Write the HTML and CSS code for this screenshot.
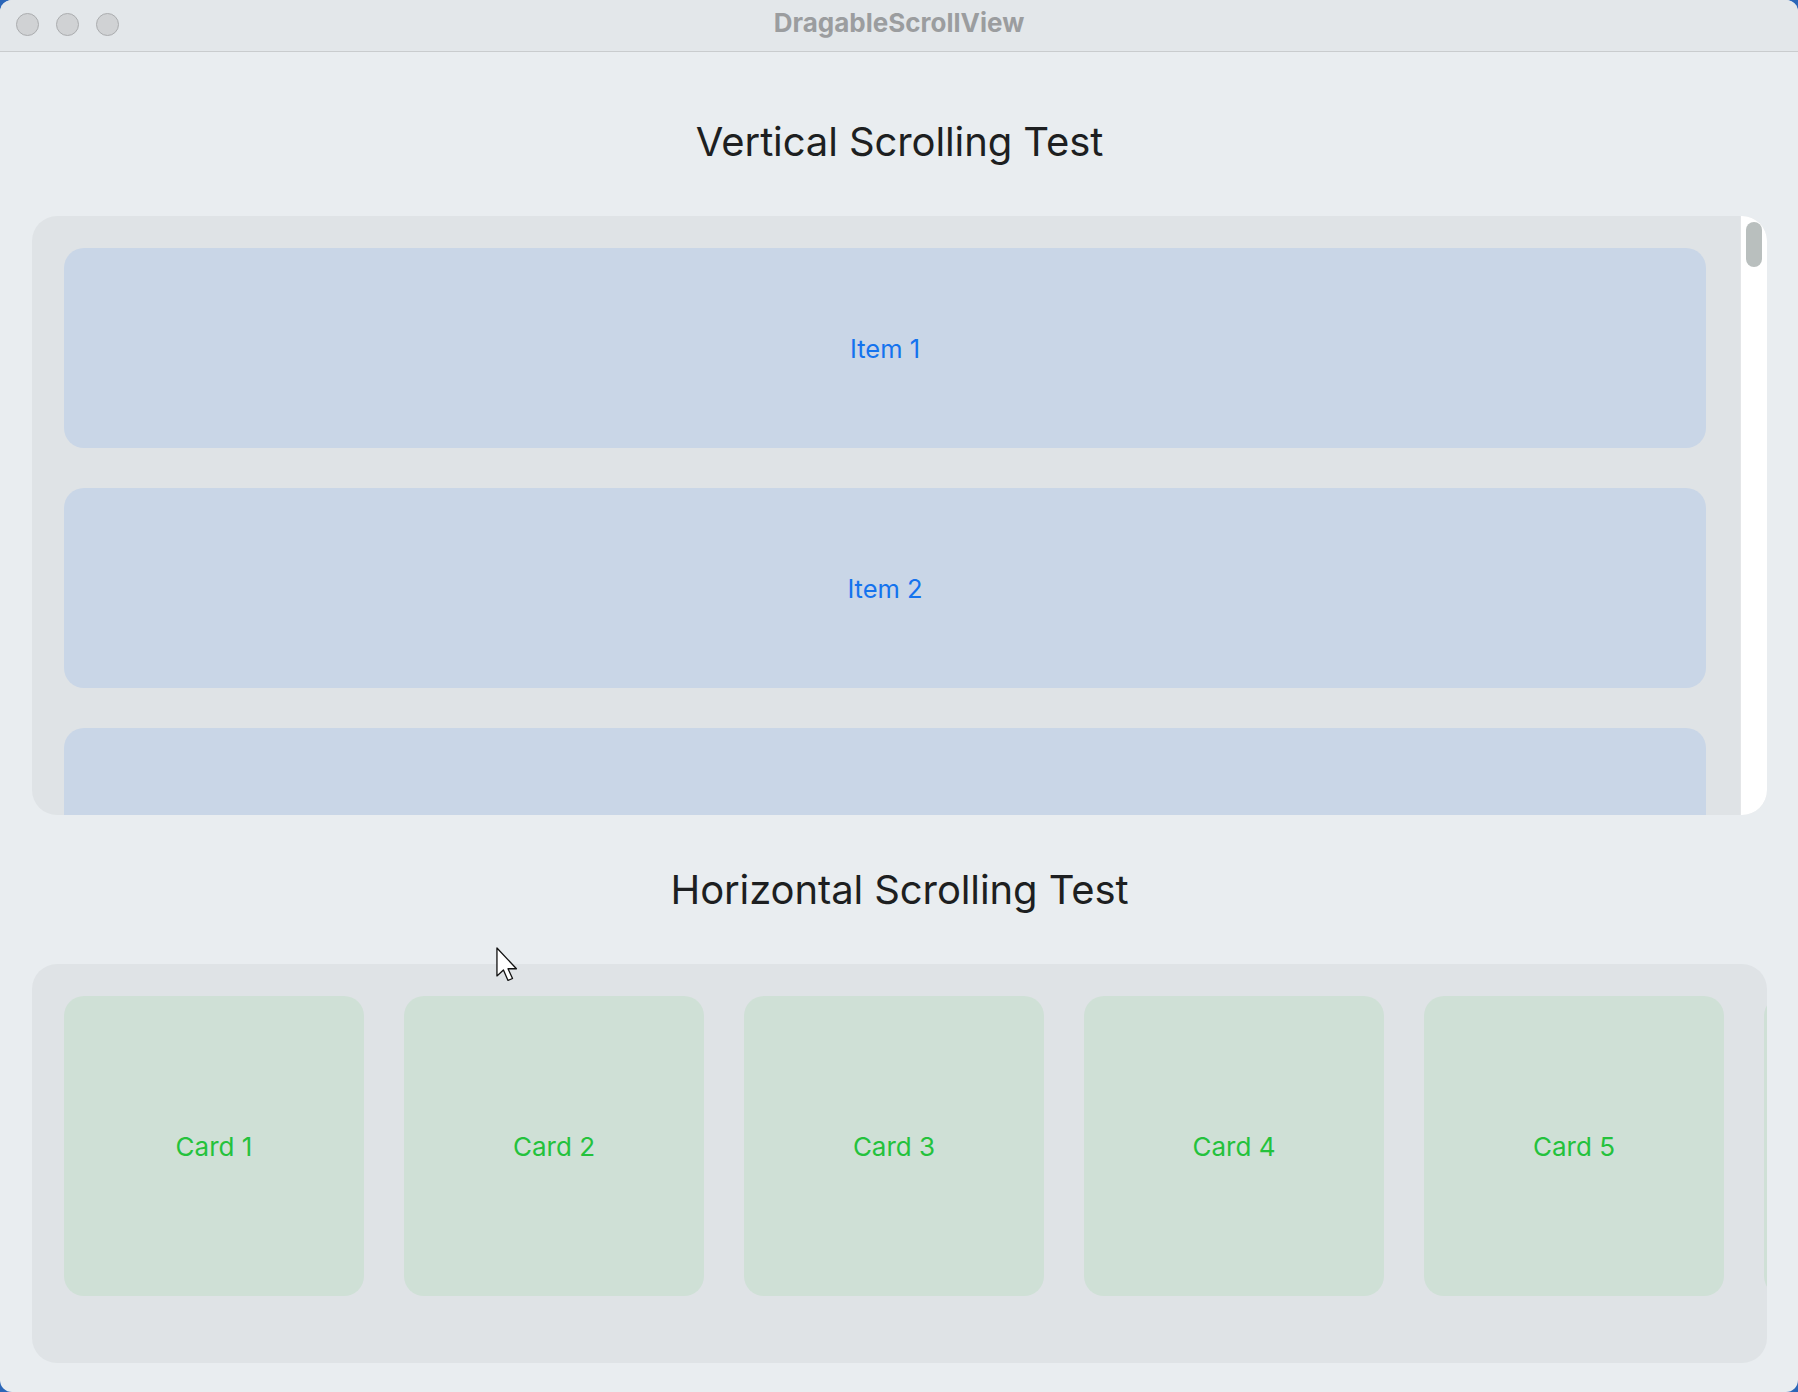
FILE: index.html
```html
<!DOCTYPE html>
<html lang="en">
<head>
<meta charset="utf-8">
<title>DragableScrollView</title>
<link rel="stylesheet" href="styles.css">
</head>
<body>
<div class="window">
  <header class="titlebar">
    <div class="lights">
      <span class="light"></span>
      <span class="light"></span>
      <span class="light"></span>
    </div>
    <div class="title">DragableScrollView</div>
    <div class="spacer"></div>
  </header>
  <main class="content">
    <h2 class="heading">Vertical Scrolling Test</h2>
    <section class="vpanel">
      <div class="vscroll">
        <div class="item">Item 1</div>
        <div class="item">Item 2</div>
        <div class="item"></div>
      </div>
      <div class="track"><div class="thumb"></div></div>
    </section>
    <h2 class="heading">Horizontal Scrolling Test</h2>
    <section class="hpanel">
      <div class="hscroll">
        <div class="card">Card 1</div>
        <div class="card">Card 2</div>
        <div class="card">Card 3</div>
        <div class="card">Card 4</div>
        <div class="card">Card 5</div>
        <div class="card"></div>
      </div>
    </section>
  </main>
  <svg class="cursor" width="26" height="39" viewBox="0 0 20 30">
    <path d="M1.5 1.5 L1.5 23 L6.5 18.5 L10 26.5 L13.5 25 L10 17.5 L16.5 17.5 Z" fill="#ffffff" stroke="#111111" stroke-width="1" stroke-linejoin="round"/>
  </svg>
</div>
</body>
</html>
```

FILE: styles.css
```css
* { box-sizing: border-box; }
html, body { margin: 0; padding: 0; }
body {
  background: #2b66b8;
  width: 1798px;
  height: 1392px;
  overflow: hidden;
  font-family: Inter, "Liberation Sans", sans-serif;
}
.window {
  position: relative;
  width: 1798px;
  height: 1392px;
  background: #e9edf0;
  border-radius: 12px;
  overflow: hidden;
}
.titlebar {
  height: 52px;
  background: #e3e7ea;
  border-bottom: 1px solid #c9ccce;
  display: grid;
  grid-template-columns: 1fr auto 1fr;
  align-items: start;
}
.lights {
  display: flex;
  gap: 17px;
  padding: 13px 0 0 16px;
}
.light {
  width: 23px;
  height: 23px;
  border-radius: 50%;
  background: #d0d2d4;
  border: 1px solid #abadaf;
}
.title {
  padding-top: 7px;
  font-weight: 700;
  font-size: 26px;
  line-height: 32px;
  color: #9b9d9f;
  letter-spacing: 0;
}
.content {
  display: flex;
  flex-direction: column;
  padding: 15px 31px 0 32px;
}
.heading {
  margin: 50px 0 49px;
  height: 50px;
  line-height: 50px;
  text-align: center;
  font-weight: 400;
  font-size: 40px;
  color: #1d1f21;
  letter-spacing: -0.1px;
}
.vpanel {
  height: 599px;
  display: flex;
  background: #dfe3e6;
  border-radius: 25px;
  overflow: hidden;
}
.vscroll {
  flex: 1;
  display: flex;
  flex-direction: column;
  gap: 40px;
  padding: 32px 34px 0 32px;
  overflow: hidden;
}
.item {
  flex: 0 0 200px;
  border-radius: 20px;
  background: #c9d6e7;
  color: #1473ee;
  font-size: 25.5px;
  display: flex;
  align-items: center;
  justify-content: center;
}
.track {
  width: 27px;
  background: #ffffff;
  border-left: 1px solid #e4e6e8;
  padding: 6px 0 0 5px;
}
.thumb {
  width: 16px;
  height: 45px;
  border-radius: 8px;
  background: #b9bfbe;
}
.hpanel {
  height: 399px;
  background: #dfe3e6;
  border-radius: 25px;
  overflow: hidden;
  padding: 32px 0 0 32px;
}
.hscroll {
  display: flex;
  gap: 40px;
  overflow: hidden;
}
.card {
  flex: 0 0 300px;
  height: 300px;
  border-radius: 20px;
  background: #cfe0d6;
  color: #24c23c;
  font-size: 26px;
  display: flex;
  align-items: center;
  justify-content: center;
}
.cursor {
  position: absolute;
  left: 495px;
  top: 946px;
}
```
